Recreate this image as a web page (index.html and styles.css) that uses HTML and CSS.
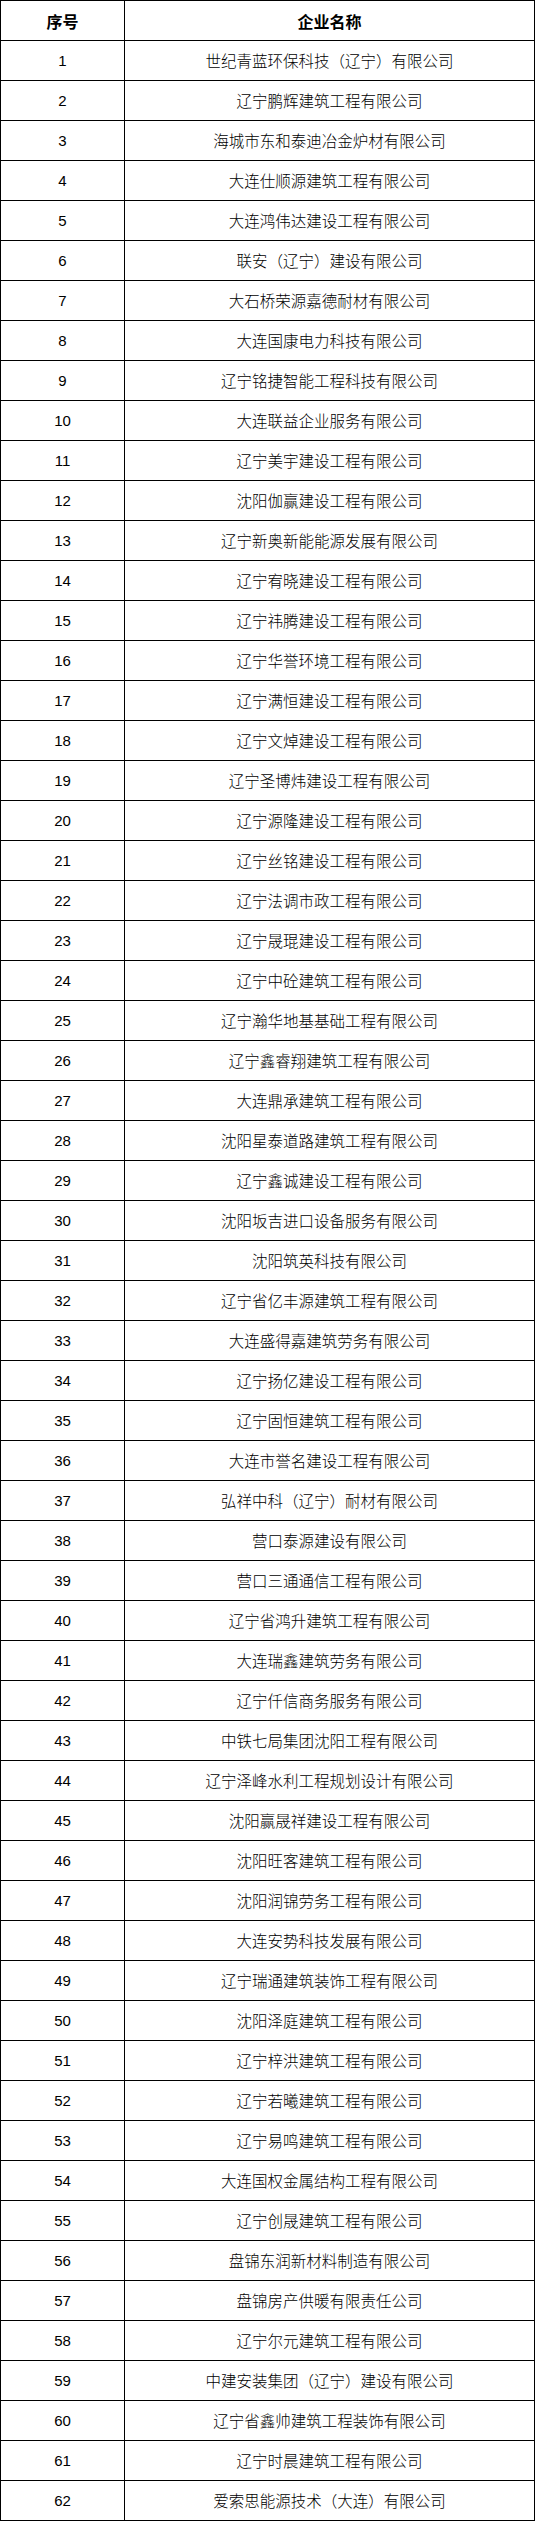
FILE: index.html
```html
<!DOCTYPE html>
<html lang="zh-CN">
<head>
<meta charset="utf-8">
<title>企业名单</title>
<link rel="stylesheet" href="styles.css">
</head>
<body>
<div class="table">
  <div class="cell head">序号</div><div class="cell head">企业名称</div>
  <div class="cell num">1</div><div class="cell name">世纪青蓝环保科技（辽宁）有限公司</div>
  <div class="cell num">2</div><div class="cell name">辽宁鹏辉建筑工程有限公司</div>
  <div class="cell num">3</div><div class="cell name">海城市东和泰迪冶金炉材有限公司</div>
  <div class="cell num">4</div><div class="cell name">大连仕顺源建筑工程有限公司</div>
  <div class="cell num">5</div><div class="cell name">大连鸿伟达建设工程有限公司</div>
  <div class="cell num">6</div><div class="cell name">联安（辽宁）建设有限公司</div>
  <div class="cell num">7</div><div class="cell name">大石桥荣源嘉德耐材有限公司</div>
  <div class="cell num">8</div><div class="cell name">大连国康电力科技有限公司</div>
  <div class="cell num">9</div><div class="cell name">辽宁铭捷智能工程科技有限公司</div>
  <div class="cell num">10</div><div class="cell name">大连联益企业服务有限公司</div>
  <div class="cell num">11</div><div class="cell name">辽宁美宇建设工程有限公司</div>
  <div class="cell num">12</div><div class="cell name">沈阳伽赢建设工程有限公司</div>
  <div class="cell num">13</div><div class="cell name">辽宁新奥新能能源发展有限公司</div>
  <div class="cell num">14</div><div class="cell name">辽宁宥晓建设工程有限公司</div>
  <div class="cell num">15</div><div class="cell name">辽宁祎腾建设工程有限公司</div>
  <div class="cell num">16</div><div class="cell name">辽宁华誉环境工程有限公司</div>
  <div class="cell num">17</div><div class="cell name">辽宁满恒建设工程有限公司</div>
  <div class="cell num">18</div><div class="cell name">辽宁文焯建设工程有限公司</div>
  <div class="cell num">19</div><div class="cell name">辽宁圣博炜建设工程有限公司</div>
  <div class="cell num">20</div><div class="cell name">辽宁源隆建设工程有限公司</div>
  <div class="cell num">21</div><div class="cell name">辽宁丝铭建设工程有限公司</div>
  <div class="cell num">22</div><div class="cell name">辽宁法调市政工程有限公司</div>
  <div class="cell num">23</div><div class="cell name">辽宁晟琨建设工程有限公司</div>
  <div class="cell num">24</div><div class="cell name">辽宁中砼建筑工程有限公司</div>
  <div class="cell num">25</div><div class="cell name">辽宁瀚华地基基础工程有限公司</div>
  <div class="cell num">26</div><div class="cell name">辽宁鑫睿翔建筑工程有限公司</div>
  <div class="cell num">27</div><div class="cell name">大连鼎承建筑工程有限公司</div>
  <div class="cell num">28</div><div class="cell name">沈阳星泰道路建筑工程有限公司</div>
  <div class="cell num">29</div><div class="cell name">辽宁鑫诚建设工程有限公司</div>
  <div class="cell num">30</div><div class="cell name">沈阳坂吉进口设备服务有限公司</div>
  <div class="cell num">31</div><div class="cell name">沈阳筑英科技有限公司</div>
  <div class="cell num">32</div><div class="cell name">辽宁省亿丰源建筑工程有限公司</div>
  <div class="cell num">33</div><div class="cell name">大连盛得嘉建筑劳务有限公司</div>
  <div class="cell num">34</div><div class="cell name">辽宁扬亿建设工程有限公司</div>
  <div class="cell num">35</div><div class="cell name">辽宁固恒建筑工程有限公司</div>
  <div class="cell num">36</div><div class="cell name">大连市誉名建设工程有限公司</div>
  <div class="cell num">37</div><div class="cell name">弘祥中科（辽宁）耐材有限公司</div>
  <div class="cell num">38</div><div class="cell name">营口泰源建设有限公司</div>
  <div class="cell num">39</div><div class="cell name">营口三通通信工程有限公司</div>
  <div class="cell num">40</div><div class="cell name">辽宁省鸿升建筑工程有限公司</div>
  <div class="cell num">41</div><div class="cell name">大连瑞鑫建筑劳务有限公司</div>
  <div class="cell num">42</div><div class="cell name">辽宁仟信商务服务有限公司</div>
  <div class="cell num">43</div><div class="cell name">中铁七局集团沈阳工程有限公司</div>
  <div class="cell num">44</div><div class="cell name">辽宁泽峰水利工程规划设计有限公司</div>
  <div class="cell num">45</div><div class="cell name">沈阳赢晟祥建设工程有限公司</div>
  <div class="cell num">46</div><div class="cell name">沈阳旺客建筑工程有限公司</div>
  <div class="cell num">47</div><div class="cell name">沈阳润锦劳务工程有限公司</div>
  <div class="cell num">48</div><div class="cell name">大连安势科技发展有限公司</div>
  <div class="cell num">49</div><div class="cell name">辽宁瑞通建筑装饰工程有限公司</div>
  <div class="cell num">50</div><div class="cell name">沈阳泽庭建筑工程有限公司</div>
  <div class="cell num">51</div><div class="cell name">辽宁梓洪建筑工程有限公司</div>
  <div class="cell num">52</div><div class="cell name">辽宁若曦建筑工程有限公司</div>
  <div class="cell num">53</div><div class="cell name">辽宁易鸣建筑工程有限公司</div>
  <div class="cell num">54</div><div class="cell name">大连国权金属结构工程有限公司</div>
  <div class="cell num">55</div><div class="cell name">辽宁创晟建筑工程有限公司</div>
  <div class="cell num">56</div><div class="cell name">盘锦东润新材料制造有限公司</div>
  <div class="cell num">57</div><div class="cell name">盘锦房产供暖有限责任公司</div>
  <div class="cell num">58</div><div class="cell name">辽宁尔元建筑工程有限公司</div>
  <div class="cell num">59</div><div class="cell name">中建安装集团（辽宁）建设有限公司</div>
  <div class="cell num">60</div><div class="cell name">辽宁省鑫帅建筑工程装饰有限公司</div>
  <div class="cell num">61</div><div class="cell name">辽宁时晨建筑工程有限公司</div>
  <div class="cell num">62</div><div class="cell name">爱索思能源技术（大连）有限公司</div>
</div>
</body>
</html>
```

FILE: styles.css
```css
html, body {
  margin: 0;
  padding: 0;
  background: #ffffff;
}

body {
  font-family: "Noto Sans CJK SC", "Noto Sans", sans-serif;
  color: #000000;
  font-size: 16px;
}

.table {
  display: grid;
  grid-template-columns: 124px 410px;
  width: 535px;
  box-sizing: border-box;
  border-top: 1px solid #000;
  border-left: 1px solid #000;
}

.cell {
  height: 40px;
  box-sizing: border-box;
  border-right: 1px solid #000;
  border-bottom: 1px solid #000;
  display: flex;
  align-items: center;
  justify-content: center;
  white-space: nowrap;
  line-height: 1;
}

.head {
  font-weight: 700;
  font-size: 16px;
}

.num {
  font-family: "Liberation Sans", "DejaVu Sans", sans-serif;
  font-size: 15px;
}

.name {
  font-size: 15.5px;
  font-weight: 300;
}
```
